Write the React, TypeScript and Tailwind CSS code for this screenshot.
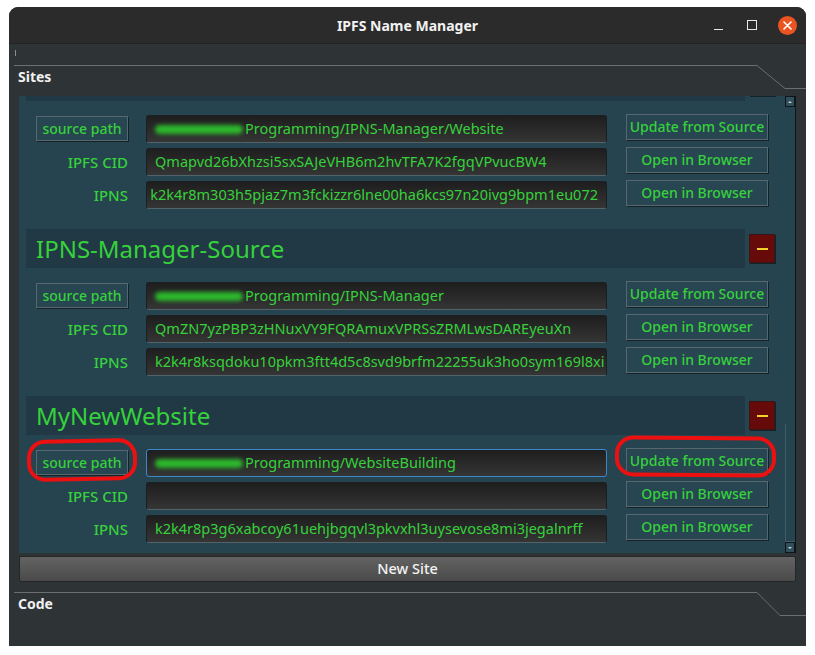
import React from "react";

const green = "text-[#36d13b]";

function SideButton({ label }: { label: string }) {
    return (
        <button className={`w-[142px] h-[26px] bg-[#284552] border border-[#58676e] shadow-[1px_1px_0_#14232a] text-[14px] font-medium leading-none ${green}`}>
            {label}
        </button>
    );
}

function Field({ value, blob, focused, alignEnd }: { value: string; blob?: boolean; focused?: boolean; alignEnd?: boolean }) {
    return (
        <div
            className={`w-[461px] h-[28px] rounded-[3px] border ${focused ? "border-[#3e86cc]" : "border-[#1b1f22] border-b-[#53636a]"} bg-gradient-to-b from-[#1e1e1e] to-[#353535] px-[8px] flex items-center overflow-hidden whitespace-nowrap text-[14.5px] ${green} ${alignEnd ? "justify-end" : "justify-start"}`}
        >
            {blob && <span className="inline-block shrink-0 w-[88px] h-[9px] rounded-full bg-[#2cb82c] blur-[2px] mr-[2px]" />}
            <span className="shrink-0">{value}</span>
        </div>
    );
}

function Row({ label, isButton, value, blob, focused, alignEnd, side }: {
    label: string; isButton?: boolean; value: string; blob?: boolean; focused?: boolean; alignEnd?: boolean; side: string;
}) {
    return (
        <div className="flex items-start h-[28px]">
            <div className="w-[93px] flex justify-end">
                {isButton ? (
                    <button className={`mt-[1px] w-[92px] h-[25px] bg-[#284552] border border-[#58676e] shadow-[1px_1px_0_#14232a] text-[14px] font-medium leading-none ${green}`}>
                        {label}
                    </button>
                ) : (
                    <span className={`h-[28px] flex items-center text-[15px] font-medium ${green}`}>{label}</span>
                )}
            </div>
            <div className="ml-[18px]">
                <Field value={value} blob={blob} focused={focused} alignEnd={alignEnd} />
            </div>
            <div className="ml-[19px] -mt-[1px]">
                <SideButton label={side} />
            </div>
        </div>
    );
}

type Site = { name: string; path: string; cid: string; ipns: string; ipnsEnd?: boolean; focused?: boolean; scrolledAway?: boolean };

const sites: Site[] = [
    { name: "IPNS-Manager-Website", path: "Programming/IPNS-Manager/Website", cid: "Qmapvd26bXhzsi5sxSAJeVHB6m2hvTFA7K2fgqVPvucBW4", ipns: "k2k4r8m303h5pjaz7m3fckizzr6lne00ha6kcs97n20ivg9bpm1eu072", ipnsEnd: true, scrolledAway: true },
    { name: "IPNS-Manager-Source", path: "Programming/IPNS-Manager", cid: "QmZN7yzPBP3zHNuxVY9FQRAmuxVPRSsZRMLwsDAREyeuXn", ipns: "k2k4r8ksqdoku10pkm3ftt4d5c8svd9brfm22255uk3ho0sym169l8xi" },
    { name: "MyNewWebsite", path: "Programming/WebsiteBuilding", cid: "", ipns: "k2k4r8p3g6xabcoy61uehjbgqvl3pkvxhl3uysevose8mi3jegalnrff", focused: true },
];

function SiteBlock({ site }: { site: Site }) {
    return (
        <div className="flex flex-col">
            <div className="flex items-start h-[39px]">
                <div className={`w-[719px] h-[39px] bg-[#213945] flex items-center pl-[10px] text-[24px] ${green}`}>
                    <span className={site.scrolledAway ? "invisible" : ""}>{site.name}</span>
                </div>
                <button className="ml-[4px] mt-[5px] w-[26px] h-[29px] bg-[#660a0a] border border-[#3b1515] shadow-[1px_1px_0_#14232a] flex items-center justify-center">
                    <span className="block w-[11px] h-[2px] bg-[#f2d12c]" />
                </button>
            </div>
            <div className="mt-[14px] pl-[9px] flex flex-col gap-[5px]">
                <Row label="source path" isButton value={site.path} blob focused={site.focused} side="Update from Source" />
                <Row label="IPFS CID" value={site.cid} side="Open in Browser" />
                <Row label="IPNS" value={site.ipns} alignEnd={site.ipnsEnd} side="Open in Browser" />
            </div>
        </div>
    );
}

function TabLine({ label, diagEnd }: { label: string; diagEnd: number }) {
    return (
        <div className="relative h-[33px]">
            <svg className="absolute left-0 top-0" width="797" height="33">
                <polyline points={`5,2.5 748,2.5 ${diagEnd},25.5 797,25.5`} fill="none" stroke="#6b6f72" strokeWidth="1" />
            </svg>
            <div className="relative pl-[9px] pt-[4px] text-[14px] font-bold text-[#f0f0f0] leading-[20px]">{label}</div>
        </div>
    );
}

export default function App() {
    return (
        <div className="w-[815px] h-[655px] bg-white pt-[7px] pl-[9px] relative" style={{ fontFamily: "'Noto Sans', 'Open Sans', sans-serif" }}>
            <div className="w-[797px] h-[639px] rounded-t-[9px] overflow-hidden bg-[#2e3336] flex flex-col">
                <div className="h-[37px] shrink-0 bg-[#2b2b2b] border-b border-[#232323] relative flex items-center justify-center">
                    <span className="text-[14px] font-bold text-[#f2f2f2]">IPFS Name Manager</span>
                    <div className="absolute right-[9px] top-0 h-full flex items-center">
                        <span className="block w-[9px] h-[1.5px] bg-[#e8e8e8] mt-[9px] mr-[24px]" />
                        <span className="block w-[10px] h-[10px] border border-[#e8e8e8] mr-[21px]" />
                        <span className="w-[19px] h-[19px] rounded-full bg-[#e95420] flex items-center justify-center">
                            <svg width="9" height="9" viewBox="0 0 9 9">
                                <path d="M1 1 L8 8 M8 1 L1 8" stroke="#ffffff" strokeWidth="1.6" strokeLinecap="round" />
                            </svg>
                        </span>
                    </div>
                </div>

                <div className="h-[19px] shrink-0 pl-[6px] pt-[6px]">
                    <span className="block w-[1px] h-[6px] bg-[#8a8d90]" />
                </div>

                <TabLine label="Sites" diagEnd={776} />

                <div className="ml-[10px] w-[777px] h-[457px] shrink-0 flex">
                    <div className="w-[766px] h-full bg-[#264350] overflow-hidden">
                        <div className="-mt-[34px] pl-[7px] flex flex-col gap-[20px]">
                            {sites.map((s) => (
                                <SiteBlock key={s.name} site={s} />
                            ))}
                        </div>
                    </div>
                    <div className="w-[11px] h-full flex flex-col bg-[#264350] border-r border-[#0f1518]">
                        <div className="h-[11px] bg-[#2f4f5c] border border-[#0f1518] flex items-center justify-center">
                            <span className="block w-0 h-0 border-l-[2px] border-r-[2px] border-b-[2px] border-l-transparent border-r-transparent border-b-[#d0d0d0]" />
                        </div>
                        <div className="flex-1 flex flex-col justify-end">
                            <div className="h-[118px] border-l border-[#3f5c68] border-b border-[#0f1518] bg-[#264350]" />
                        </div>
                        <div className="h-[11px] bg-[#2f4f5c] border border-[#0f1518] flex items-center justify-center">
                            <span className="block w-0 h-0 border-l-[2px] border-r-[2px] border-t-[2px] border-l-transparent border-r-transparent border-t-[#d0d0d0]" />
                        </div>
                    </div>
                </div>

                <button className="ml-[10px] mt-[3px] w-[777px] h-[26px] shrink-0 rounded-[2px] bg-gradient-to-b from-[#636363] to-[#4a4a4a] border border-[#262626] text-[14.5px] font-medium text-[#f2f2f2]">
                    New Site
                </button>

                <div className="mt-[8px]">
                    <TabLine label="Code" diagEnd={771} />
                </div>
            </div>

            <div className="absolute left-[27px] top-[439px] w-[110px] h-[42px] border-[4px] border-[#ec1010] rounded-[18px] -rotate-1" />
            <div className="absolute left-[615px] top-[436px] w-[161px] h-[41px] border-[4px] border-[#ec1010] rounded-[18px] rotate-[0.5deg]" />
        </div>
    );
}
